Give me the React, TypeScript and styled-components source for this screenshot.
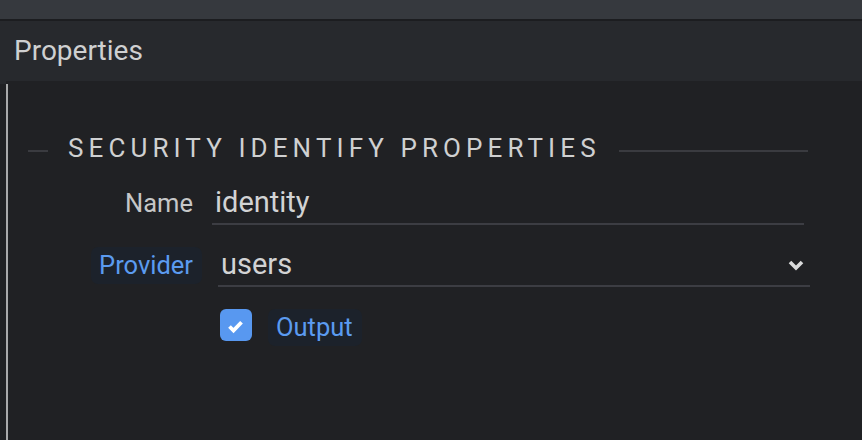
import React from "react";
import styled, { createGlobalStyle } from "styled-components";

const Global = createGlobalStyle`
  html, body { margin: 0; padding: 0; background: #202124; }
  body { font-family: Roboto, "Liberation Sans", sans-serif; }
  * { box-sizing: border-box; }
`;

const Page = styled.div`
  width: 862px;
  height: 440px;
  overflow: hidden;
  display: flex;
  flex-direction: column;
  background: #202124;
`;

const TopBar = styled.div`
  height: 21px;
  background: #36393e;
  border-bottom: 2px solid #1c1d20;
  flex: none;
`;

const Header = styled.div`
  height: 60px;
  flex: none;
  display: flex;
  align-items: center;
  padding-left: 14px;
  background: #27292d;
`;

const HeaderTitle = styled.div`
  font-size: 28px;
  color: #cfd0d1;
  line-height: 1;
`;

const Body = styled.div`
  flex: 1;
  display: flex;
  padding-left: 6px;
  background: linear-gradient(#27292d, #27292d) 0 0 / 6px 3px no-repeat, #202124;
`;

const Panel = styled.div`
  flex: 1;
  margin-top: 3px;
  border-left: 2px solid #a9aaab;
  padding: 49px 54px 0 0;
  display: flex;
  flex-direction: column;
  gap: 22px;
`;

const SectionHead = styled.div`
  display: flex;
  align-items: center;
  padding-left: 20px;
  height: 30px;
`;

const Rule = styled.div<{ $grow?: boolean }>`
  height: 2px;
  margin-top: 6px;
  background: #3a3b40;
  width: ${(p) => (p.$grow ? "auto" : "20px")};
  flex: ${(p) => (p.$grow ? "1" : "none")};
`;

const SectionTitle = styled.div`
  margin: 0 18px 0 20px;
  font-size: 26px;
  line-height: 30px;
  letter-spacing: 5.1px;
  color: #cfd0d1;
  white-space: nowrap;
`;

const Row = styled.div<{ $align?: string }>`
  display: flex;
  align-items: ${(p) => p.$align || "baseline"};
`;

const LabelCell = styled.div`
  width: 194px;
  flex: none;
  display: flex;
  justify-content: flex-end;
`;

const Label = styled.span<{ $badge?: boolean }>`
  display: inline-block;
  font-size: 25.5px;
  line-height: 37px;
  padding: 0 9px 0 8px;
  border-radius: 7px;
  color: ${(p) => (p.$badge ? "#5b9bf0" : "#c6c7c8")};
  background: ${(p) => (p.$badge ? "#1c222b" : "transparent")};
`;

const Field = styled.div<{ $ml: number; $mr: number; $pl: number }>`
  flex: 1;
  display: flex;
  align-items: center;
  margin-left: ${(p) => p.$ml}px;
  margin-right: ${(p) => p.$mr}px;
  padding: 0 6px 4px ${(p) => p.$pl}px;
  border-bottom: 2px solid #3c3d43;
  font-size: 29px;
  line-height: 34px;
  color: #d2d3d4;
`;

const FieldText = styled.span`
  flex: 1;
`;

const Checkbox = styled.div`
  width: 32px;
  height: 32px;
  margin: 0 16px 0 18px;
  border-radius: 6px;
  background: #5898f0;
  display: flex;
  flex: none;
`;

function Chevron() {
  return (
    <svg width="16" height="11" viewBox="0 0 16 11" style={{ marginTop: 3 }}>
      <polyline
        points="2,2 8,8 14,2"
        fill="none"
        stroke="#d9dadb"
        strokeWidth="3.6"
        strokeLinejoin="miter"
      />
    </svg>
  );
}

function Check() {
  return (
    <svg width="32" height="32" viewBox="0 0 32 32">
      <polyline
        points="9.5,17.5 13.5,21.5 21.5,13.2"
        fill="none"
        stroke="#ffffff"
        strokeWidth="3.8"
        strokeLinejoin="miter"
      />
    </svg>
  );
}

export default function App() {
  return (
    <>
      <Global />
      <Page>
        <TopBar />
        <Header>
          <HeaderTitle>Properties</HeaderTitle>
        </Header>
        <Body>
          <Panel>
            <SectionHead>
              <Rule />
              <SectionTitle>SECURITY IDENTIFY PROPERTIES</SectionTitle>
              <Rule $grow />
            </SectionHead>
            <Row>
              <LabelCell>
                <Label>Name</Label>
              </LabelCell>
              <Field $ml={10} $mr={4} $pl={3}>
                <FieldText>identity</FieldText>
              </Field>
            </Row>
            <Row>
              <LabelCell>
                <Label $badge>Provider</Label>
              </LabelCell>
              <Field $ml={16} $mr={-2} $pl={3}>
                <FieldText>users</FieldText>
                <Chevron />
              </Field>
            </Row>
            <Row $align="flex-start">
              <LabelCell />
              <Checkbox>
                <Check />
              </Checkbox>
              <Label $badge>Output</Label>
            </Row>
          </Panel>
        </Body>
      </Page>
    </>
  );
}
